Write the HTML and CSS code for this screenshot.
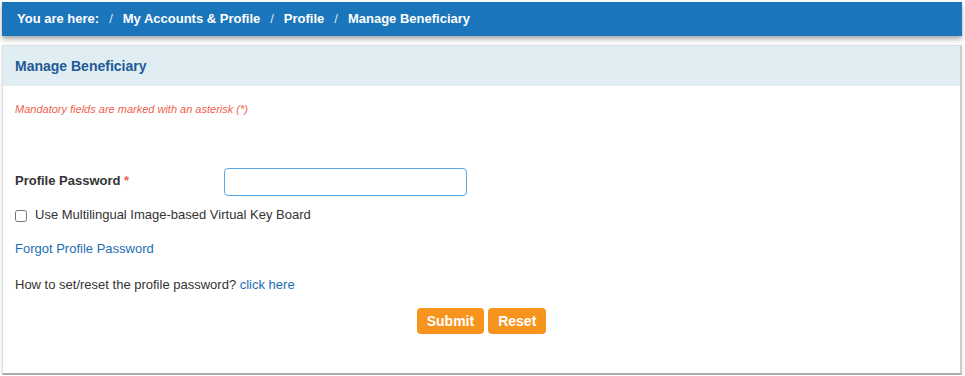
FILE: index.html
```html
<!DOCTYPE html>
<html lang="en">
<head>
    <meta charset="UTF-8">
    <title>Manage Beneficiary</title>
    <link rel="stylesheet" href="styles.css">
</head>
<body>
    <div class="breadcrumb">
        <span>You are here:</span>
        <span class="sep">/</span>
        <a href="#">My Accounts &amp; Profile</a>
        <span class="sep">/</span>
        <a href="#">Profile</a>
        <span class="sep">/</span>
        <span>Manage Beneficiary</span>
    </div>

    <div class="panel">
        <div class="panel-head">Manage Beneficiary</div>
        <div class="panel-body">
            <p class="mandatory">Mandatory fields are marked with an asterisk (*)</p>

            <form>
                <div class="form-row">
                    <label for="pwd">Profile Password <span class="req">*</span></label>
                    <input type="password" id="pwd" name="pwd">
                </div>

                <label class="check">
                    <input type="checkbox">
                    Use Multilingual Image-based Virtual Key Board
                </label>

                <a href="#" class="link forgot">Forgot Profile Password</a>

                <p class="help">How to set/reset the profile password? <a href="#" class="link">click here</a></p>

                <div class="actions">
                    <button type="submit">Submit</button>
                    <button type="reset">Reset</button>
                </div>
            </form>
        </div>
    </div>
</body>
</html>
```

FILE: styles.css
```css
* {
    margin: 0;
    padding: 0;
    box-sizing: border-box;
}

body {
    font-family: "Liberation Sans", Arial, sans-serif;
    font-size: 13px;
    color: #333;
    background: #fff;
    padding: 2px 3px 0 2px;
}

.breadcrumb {
    display: flex;
    align-items: center;
    gap: 9px;
    height: 34px;
    padding: 0 0 2px 15px;
    background: #1b75bb;
    color: #fff;
    font-weight: bold;
    font-size: 13px;
    box-shadow: 0 3px 5px rgba(0, 0, 0, 0.35);
}

.breadcrumb a {
    color: #fff;
    text-decoration: none;
}

.breadcrumb .sep {
    font-weight: normal;
    color: #d6e6f3;
    margin: 0 1px;
}

.panel {
    margin-top: 9px;
    height: 330px;
    border: 1px solid #ddd;
    border-bottom: 2px solid #aaa;
    border-right: 2px solid #ccc;
    box-shadow: 0 1px 3px rgba(0, 0, 0, 0.15);
}

.panel-head {
    height: 40px;
    line-height: 40px;
    padding-left: 12px;
    background: #e0edf2;
    color: #1d5a96;
    font-size: 14px;
    font-weight: bold;
}

.panel-body {
    padding: 17px 12px 0;
}

.mandatory {
    font-size: 11px;
    font-style: italic;
    color: #f0614d;
}

.form-row {
    display: flex;
    align-items: flex-start;
    margin-top: 53px;
}

.form-row label {
    width: 209px;
    font-weight: bold;
    padding-top: 5px;
}

.req {
    color: #f0614d;
}

.form-row input {
    width: 243px;
    height: 28px;
    border: 1px solid #5aa9e6;
    border-radius: 4px;
    padding: 0 6px;
    font-size: 13px;
}

.check {
    display: flex;
    align-items: center;
    gap: 8px;
    margin-top: 11px;
}

.check input {
    width: 12px;
    height: 12px;
    margin: 2px 0 0 0;
}

.link {
    color: #1d6db3;
    text-decoration: none;
}

.forgot {
    display: block;
    margin-top: 19px;
}

.help {
    margin-top: 21px;
}

.actions {
    display: flex;
    justify-content: center;
    gap: 4px;
    margin-top: 16px;
}

.actions button {
    height: 26px;
    padding: 0 10px;
    border: none;
    border-radius: 4px;
    background: #f7941d;
    color: #fff;
    font-family: "Liberation Sans", Arial, sans-serif;
    font-size: 14px;
    font-weight: bold;
}
```
